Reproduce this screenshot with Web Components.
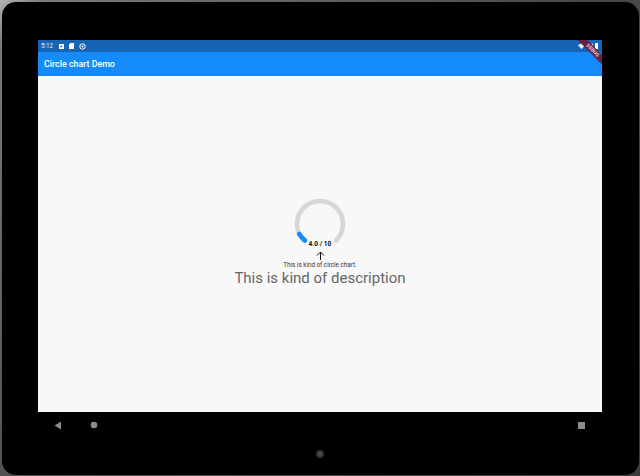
<!DOCTYPE html>
<html>
<head>
<meta charset="utf-8">
<title>Circle chart Demo</title>
<style>
  html, body { margin: 0; height: 100%; background: #333; }
  body { font-family: Roboto, "Liberation Sans", sans-serif; }
</style>
</head>
<body>
<tablet-frame>
  <status-bar></status-bar>
  <app-bar heading="Circle chart Demo"></app-bar>
  <demo-page>
    <circle-chart value="4.0" max="10"></circle-chart>
    <span slot="caption">This is kind of circle chart.</span>
    <span slot="description">This is kind of description</span>
  </demo-page>
</tablet-frame>

<script>
class TabletFrame extends HTMLElement {
  connectedCallback() {
    if (this.shadowRoot) return;
    const root = this.attachShadow({ mode: "open" });
    root.innerHTML = `
      <style>
        :host {
          display: block;
          box-sizing: border-box;
          width: 640px;
          height: 476px;
          padding: 2px 1px 1px 2px;
          background: linear-gradient(135deg, #b4b4b4 0, #7a7a7a 4%, #4a4a4a 50%, #3c3c3c 100%);
        }
        .shell {
          box-sizing: border-box;
          height: 473px;
          padding: 38px 37px 0 36px;
          background: #000;
          border-radius: 14px;
          display: grid;
          grid-template-rows: 372px 1fr;
        }
        .screen {
          position: relative;
          overflow: hidden;
          display: flex;
          flex-direction: column;
          background: #f8f8f8;
        }
        .nav {
          display: flex;
          align-items: flex-start;
          padding-top: 9px;
          height: 50px;
          position: relative;
        }
        .nav svg { display: block; }
        .back { margin-left: 16px; }
        .home { margin-left: 28px; }
        .recents { margin-left: auto; margin-right: 17px; margin-top: 1px; }
        .camera {
          position: absolute;
          left: 278px;
          top: 38px;
          width: 8px;
          height: 8px;
          border-radius: 50%;
          background: #333;
        }
        .camera::after {
          content: "";
          position: absolute;
          left: 2px;
          top: 2px;
          width: 4px;
          height: 4px;
          border-radius: 50%;
          background: #4a4a4a;
        }
        .ribbon {
          position: absolute;
          top: 6.5px;
          right: -13.5px;
          width: 46px;
          height: 6.5px;
          transform: rotate(45deg);
          background: rgba(110, 29, 60, .94);
          color: #d8d0d4;
          font: 700 5px/6.5px Roboto, sans-serif;
          text-align: center;
        }
      </style>
      <div class="shell">
        <div class="screen">
          <slot></slot>
          <div class="ribbon">DEBUG</div>
        </div>
        <div class="nav">
          <svg class="back" width="8" height="9" viewBox="0 0 8 9"><path d="M7 0.5V8.5L0.5 4.5Z" fill="#8c8c8c"/></svg>
          <svg class="home" width="8" height="8" viewBox="0 0 8 8"><circle cx="4" cy="4" r="3.3" fill="#8c8c8c"/></svg>
          <svg class="recents" width="7" height="7" viewBox="0 0 7 7"><rect width="7" height="7" fill="#8c8c8c"/></svg>
          <div class="camera"></div>
        </div>
      </div>
    `;
  }
}

class StatusBar extends HTMLElement {
  connectedCallback() {
    if (this.shadowRoot) return;
    const root = this.attachShadow({ mode: "open" });
    root.innerHTML = `
      <style>
        :host {
          display: flex;
          align-items: center;
          flex: none;
          height: 12px;
          padding: 0 4px 0 3px;
          background: #1565b4;
          color: #e3eefa;
          font: 400 6.3px/12px Roboto, sans-serif;
        }
        svg { display: block; }
        .time { margin-right: 6px; }
        .icons { display: flex; align-items: center; gap: 5px; }
        .right { margin-left: auto; display: flex; align-items: center; gap: 2px; }
      </style>
      <span class="time">5:12</span>
      <div class="icons">
        <svg width="5" height="5" viewBox="0 0 5 5"><path d="M0 0H5V5H0ZM1.6 1.2V3.8L3.8 2.5Z" fill="#fff" fill-rule="evenodd"/></svg>
        <svg width="5" height="6" viewBox="0 0 5 6"><path d="M1.6 0H5V6H0V1.6Z" fill="#fff"/></svg>
        <svg width="7" height="7" viewBox="0 0 7 7"><circle cx="3.5" cy="3.5" r="2.7" fill="none" stroke="#fff"/><circle cx="3.5" cy="3.5" r="1.1" fill="#fff"/></svg>
      </div>
      <div class="right">
        <svg width="7" height="5" viewBox="0 0 7 5"><path d="M0 1Q3.5-.8 7 1L3.5 5Z" fill="#fff"/></svg>
        <svg width="6" height="6" viewBox="0 0 6 6"><path d="M6 0V6H0Z" fill="#cfd8e3"/></svg>
        <svg width="3" height="6" viewBox="0 0 3 6"><rect width="3" height="6" rx=".5" fill="#fff"/></svg>
      </div>
    `;
  }
}

class AppBar extends HTMLElement {
  connectedCallback() {
    if (this.shadowRoot) return;
    const root = this.attachShadow({ mode: "open" });
    root.innerHTML = `
      <style>
        :host {
          display: flex;
          align-items: center;
          flex: none;
          height: 24px;
          padding-left: 6px;
          background: #148bf8;
          color: #fff;
          font: 500 8.85px/24px Roboto, sans-serif;
        }
      </style>
      <span>${this.getAttribute("heading") || ""}</span>
    `;
  }
}

class CircleChart extends HTMLElement {
  connectedCallback() {
    if (this.shadowRoot) return;
    const value = this.getAttribute("value") || "0";
    const max = this.getAttribute("max") || "10";
    const root = this.attachShadow({ mode: "open" });
    root.innerHTML = `
      <style>
        :host {
          display: block;
          position: relative;
          width: 52px;
          height: 52px;
        }
        svg { display: block; }
        .label {
          position: absolute;
          left: 0;
          right: 0;
          top: 42px;
          text-align: center;
          color: #111;
          font: 700 6.6px/9px Roboto, sans-serif;
        }
      </style>
      <svg width="52" height="52" viewBox="0 0 52 52" fill="none" stroke-width="4.6" stroke-linecap="round">
        <path d="M10 42.5A23 23 0 1 1 42 42.5" stroke="#d6d6d6"/>
        <path d="M11 42.5Q7.5 39.5 5.2 36" stroke="#148bf8"/>
      </svg>
      <div class="label">${value} / ${max}</div>
    `;
  }
}

class DemoPage extends HTMLElement {
  connectedCallback() {
    if (this.shadowRoot) return;
    const root = this.attachShadow({ mode: "open" });
    root.innerHTML = `
      <style>
        :host {
          display: flex;
          flex-direction: column;
          align-items: center;
          flex: 1;
          padding-top: 122px;
          min-height: 0;
        }
        svg { display: block; margin-top: 1px; }
        .caption {
          color: #333;
          font: 400 6.3px/8px Roboto, sans-serif;
          margin-top: 1px;
        }
        .description {
          color: #666;
          font: 400 15px/19px Roboto, sans-serif;
        }
      </style>
      <slot></slot>
      <svg width="9" height="9" viewBox="0 0 9 9" fill="none" stroke="#111" stroke-width="1"><path d="M4.5 9V1M1 4.5L4.5 1L8 4.5"/></svg>
      <div class="caption"><slot name="caption"></slot></div>
      <div class="description"><slot name="description"></slot></div>
    `;
  }
}

customElements.define("tablet-frame", TabletFrame);
customElements.define("status-bar", StatusBar);
customElements.define("app-bar", AppBar);
customElements.define("circle-chart", CircleChart);
customElements.define("demo-page", DemoPage);
</script>
</body>
</html>
